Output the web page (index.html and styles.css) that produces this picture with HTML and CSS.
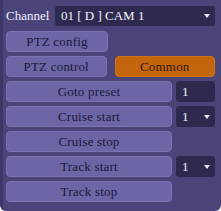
FILE: index.html
```html
<!DOCTYPE html>
<html>
<head>
<meta charset="utf-8">
<link rel="stylesheet" href="styles.css">
</head>
<body>
<div class="panel">
  <div class="row channel-row">
    <span class="label">Channel</span>
    <div class="select wide"><span>01 [ D ] CAM 1</span><span class="caret"></span></div>
  </div>
  <div class="row">
    <div class="btn half">PTZ config</div>
  </div>
  <div class="row">
    <div class="btn half">PTZ control</div>
    <div class="btn half active">Common</div>
  </div>
  <div class="row">
    <div class="btn grow">Goto preset</div>
    <div class="select small"><span>1</span></div>
  </div>
  <div class="row">
    <div class="btn grow">Cruise start</div>
    <div class="select small"><span>1</span><span class="caret"></span></div>
  </div>
  <div class="row">
    <div class="btn grow">Cruise stop</div>
    <div class="spacer"></div>
  </div>
  <div class="row">
    <div class="btn grow">Track start</div>
    <div class="select small"><span>1</span><span class="caret"></span></div>
  </div>
  <div class="row">
    <div class="btn grow">Track stop</div>
    <div class="spacer"></div>
  </div>
</div>
</body>
</html>
```

FILE: styles.css
```css
html, body {
  margin: 0;
  padding: 0;
  background: #ffffff;
}
.panel {
  width: 221px;
  height: 211px;
  box-sizing: border-box;
  background: #4a4478;
  border-left: 3px solid #3e3868;
  border-radius: 0 0 6px 6px;
  padding: 6px 6px 0 3px;
  display: flex;
  flex-direction: column;
  gap: 4px;
  font-family: "Liberation Serif", "DejaVu Serif", serif;
  font-size: 13px;
}
.row {
  display: flex;
  gap: 4px;
  height: 21px;
}
.channel-row {
  height: 20px;
  align-items: center;
  gap: 4px;
  margin-bottom: 1px;
}
.label {
  color: #f2f0ff;
  width: 45px;
}
.select {
  background: #2e2a4f;
  color: #f4f4fa;
  border-radius: 3px;
  display: flex;
  align-items: center;
  justify-content: space-between;
  box-sizing: border-box;
  padding: 0 5px 0 6px;
  height: 21px;
}
.wide {
  flex: 1;
  height: 20px;
}
.small {
  width: 39px;
}
.caret {
  width: 0;
  height: 0;
  border-left: 3px solid transparent;
  border-right: 3px solid transparent;
  border-top: 4px solid #e8e8f4;
}
.spacer {
  width: 39px;
}
.btn {
  background: #6c66a7;
  border: 1px solid #7a74b4;
  border-radius: 4px;
  color: #1b193a;
  display: flex;
  align-items: center;
  justify-content: center;
  box-sizing: border-box;
  letter-spacing: 0.2px;
}
.half {
  width: 102px;
}
.active {
  background: #c2650d;
  border-color: #cf7318;
  color: #2e1a0c;
  margin-left: 4px;
}
.grow {
  flex: 1;
}
```
